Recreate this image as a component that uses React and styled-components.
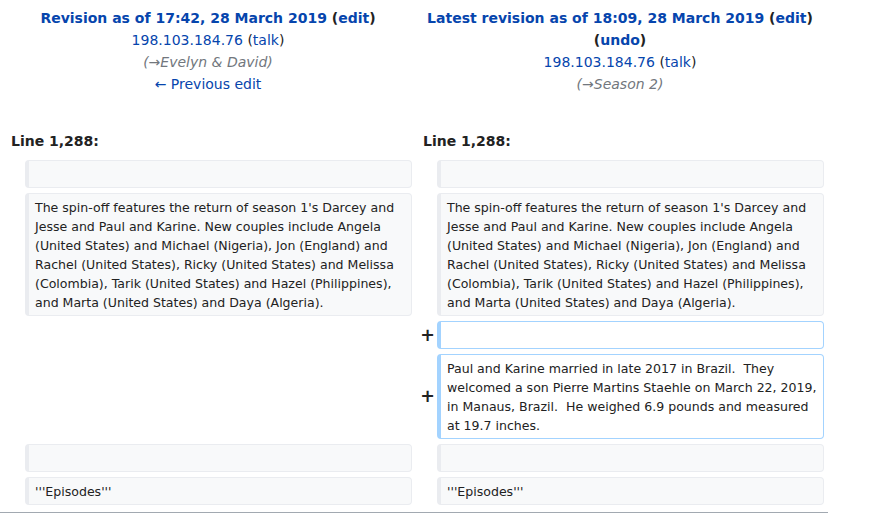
import React from "react"
import styled, { createGlobalStyle } from "styled-components"

const GlobalStyle = createGlobalStyle`
  body {
    margin: 0;
    background: #fff;
    font-family: "DejaVu Sans", "Noto Sans", sans-serif;
    font-size: 14px;
    color: #222;
  }
`

const rows = [
  { left: "", right: "" },
  {
    left:
      "The spin-off features the return of season 1's Darcey and Jesse and Paul and Karine. New couples include Angela (United States) and Michael (Nigeria), Jon (England) and Rachel (United States), Ricky (United States) and Melissa (Colombia), Tarik (United States) and Hazel (Philippines), and Marta (United States) and Daya (Algeria).",
    right:
      "The spin-off features the return of season 1's Darcey and Jesse and Paul and Karine. New couples include Angela (United States) and Michael (Nigeria), Jon (England) and Rachel (United States), Ricky (United States) and Melissa (Colombia), Tarik (United States) and Hazel (Philippines), and Marta (United States) and Daya (Algeria).",
  },
  { left: null, right: "", added: true },
  {
    left: null,
    right:
      "Paul and Karine married in late 2017 in Brazil.  They welcomed a son Pierre Martins Staehle on March 22, 2019, in Manaus, Brazil.  He weighed 6.9 pounds and measured at 19.7 inches.",
    added: true,
  },
  { left: "", right: "" },
  { left: "'''Episodes'''", right: "'''Episodes'''" },
]

const App = () => {
  return (
    <Page>
      <GlobalStyle />
      <DiffGrid>
        <Title>
          <div>
            <strong>
              <Link>Revision as of 17:42, 28 March 2019</Link> (<Link>edit</Link>)
            </strong>
          </div>
          <div>
            <Link>198.103.184.76</Link> (<Link>talk</Link>)
          </div>
          <Comment>
            (<span>→</span>Evelyn &amp; David)
          </Comment>
          <div>
            <Link>← Previous edit</Link>
          </div>
        </Title>
        <Title>
          <div>
            <strong>
              <Link>Latest revision as of 18:09, 28 March 2019</Link> (<Link>edit</Link>)
            </strong>
          </div>
          <div>
            <strong>
              (<Link>undo</Link>)
            </strong>
          </div>
          <div>
            <Link>198.103.184.76</Link> (<Link>talk</Link>)
          </div>
          <Comment>
            (<span>→</span>Season 2)
          </Comment>
        </Title>

        <LineNo>Line 1,288:</LineNo>
        <LineNo>Line 1,288:</LineNo>

        {rows.map((row, i) => (
          <React.Fragment key={i}>
            <Marker />
            {row.left === null ? <Empty /> : <Cell>{row.left}</Cell>}
            <Marker>{row.added ? "+" : ""}</Marker>
            <Cell $added={row.added}>{row.right}</Cell>
          </React.Fragment>
        ))}
      </DiffGrid>
      <Rule />
    </Page>
  )
}

const Page = styled.div`
  width: 828px;
`

const DiffGrid = styled.div`
  display: grid;
  grid-template-columns: 17px 1fr 17px 1fr;
  column-gap: 4px;
  row-gap: 5px;
  padding: 4px;
`

const Title = styled.div`
  grid-column: span 2;
  text-align: center;
  line-height: 22px;
  padding: 3px 0 30px;
`

const Link = styled.a`
  color: #0645ad;
  text-decoration: none;
  cursor: pointer;
`

const Comment = styled.div`
  font-style: italic;
  color: #72777d;
`

const LineNo = styled.div`
  grid-column: span 2;
  font-weight: bold;
  line-height: 22px;
  padding: 0 7px 3px;
`

const Marker = styled.div`
  align-self: center;
  justify-self: end;
  margin-right: -2px;
  font-weight: bold;
  font-size: 17.5px;
  line-height: 1.2;
  color: #222;
`

const Empty = styled.div``

const Cell = styled.div`
  min-height: 28px;
  box-sizing: border-box;
  font-size: 12.55px;
  line-height: 19px;
  white-space: pre-wrap;
  word-wrap: break-word;
  padding: 3.5px 4px 3.5px 6px;
  border: 1px solid ${(p) => (p.$added ? "#a3d3ff" : "#eaecf0")};
  border-left-width: 4px;
  border-radius: 4px;
  background: ${(p) => (p.$added ? "#fff" : "#f8f9fa")};
  color: #222;
`

const Rule = styled.div`
  margin-top: 3px;
  border-top: 1px solid #a2a9b1;
`

export default App
